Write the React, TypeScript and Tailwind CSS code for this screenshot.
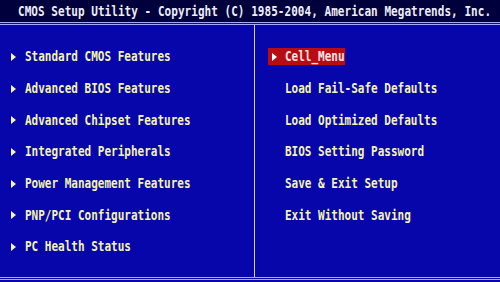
import React from "react";

const left = [
  "Standard CMOS Features",
  "Advanced BIOS Features",
  "Advanced Chipset Features",
  "Integrated Peripherals",
  "Power Management Features",
  "PNP/PCI Configurations",
  "PC Health Status",
];

const right = [
  "Load Fail-Safe Defaults",
  "Load Optimized Defaults",
  "BIOS Setting Password",
  "Save & Exit Setup",
  "Exit Without Saving",
];

function Tri({ color }: { color: string }) {
  return (
    <svg width="6" height="8" viewBox="0 0 6 8" className="shrink-0">
      <polygon points="0,0 5,4 0,8" fill={color} />
    </svg>
  );
}

function Txt({ children }: { children: React.ReactNode }) {
  return (
    <span className="inline-block scale-y-[1.35] origin-center whitespace-pre">{children}</span>
  );
}

export default function App() {
  return (
    <div
      className="w-[500px] h-[282px] bg-[#0606aa] flex flex-col overflow-hidden font-bold text-[11px] leading-none"
      style={{ fontFamily: '"DejaVu Sans Mono", "Liberation Mono", monospace' }}
    >
      <div className="h-[22px] bg-[#00003c] flex items-center pl-[18px] text-[#eeeef8] tracking-[0.04px]">
        <Txt>CMOS Setup Utility - Copyright (C) 1985-2004, American Megatrends, Inc.</Txt>
      </div>
      <div className="h-[1px] bg-[#a8a8f8]" />
      <div className="h-[1px]" />
      <div className="h-[1px] bg-[#a8a8f8]" />
      <div className="flex-1 flex">
        <div className="w-[254px] flex flex-col pt-[16px] text-[#f4f4b0]">
          {left.map((t) => (
            <div key={t} className="h-[31.7px] flex items-center">
              <div className="w-[25px] flex justify-start pl-[11px]">
                <Tri color="#f4f4b0" />
              </div>
              <Txt>{t}</Txt>
            </div>
          ))}
        </div>
        <div className="w-[1px] bg-[#d0d0f4]" />
        <div className="flex-1 flex flex-col pt-[16px] text-[#f4f4b0]">
          <div className="h-[31.7px] flex items-center">
            <div className="ml-[13px] h-[17px] w-[77px] bg-[#b80c14] flex items-center text-[#fbe4e4]">
              <div className="w-[17px] pl-[4px]">
                <Tri color="#ffffff" />
              </div>
              <Txt>Cell_Menu</Txt>
            </div>
          </div>
          {right.map((t) => (
            <div key={t} className="h-[31.7px] flex items-center pl-[30px]">
              <Txt>{t}</Txt>
            </div>
          ))}
        </div>
      </div>
      <div className="h-[1px] bg-[#a8a8f8]" />
      <div className="h-[1px]" />
      <div className="h-[1px] bg-[#a8a8f8]" />
      <div className="h-[2px]" />
    </div>
  );
}
